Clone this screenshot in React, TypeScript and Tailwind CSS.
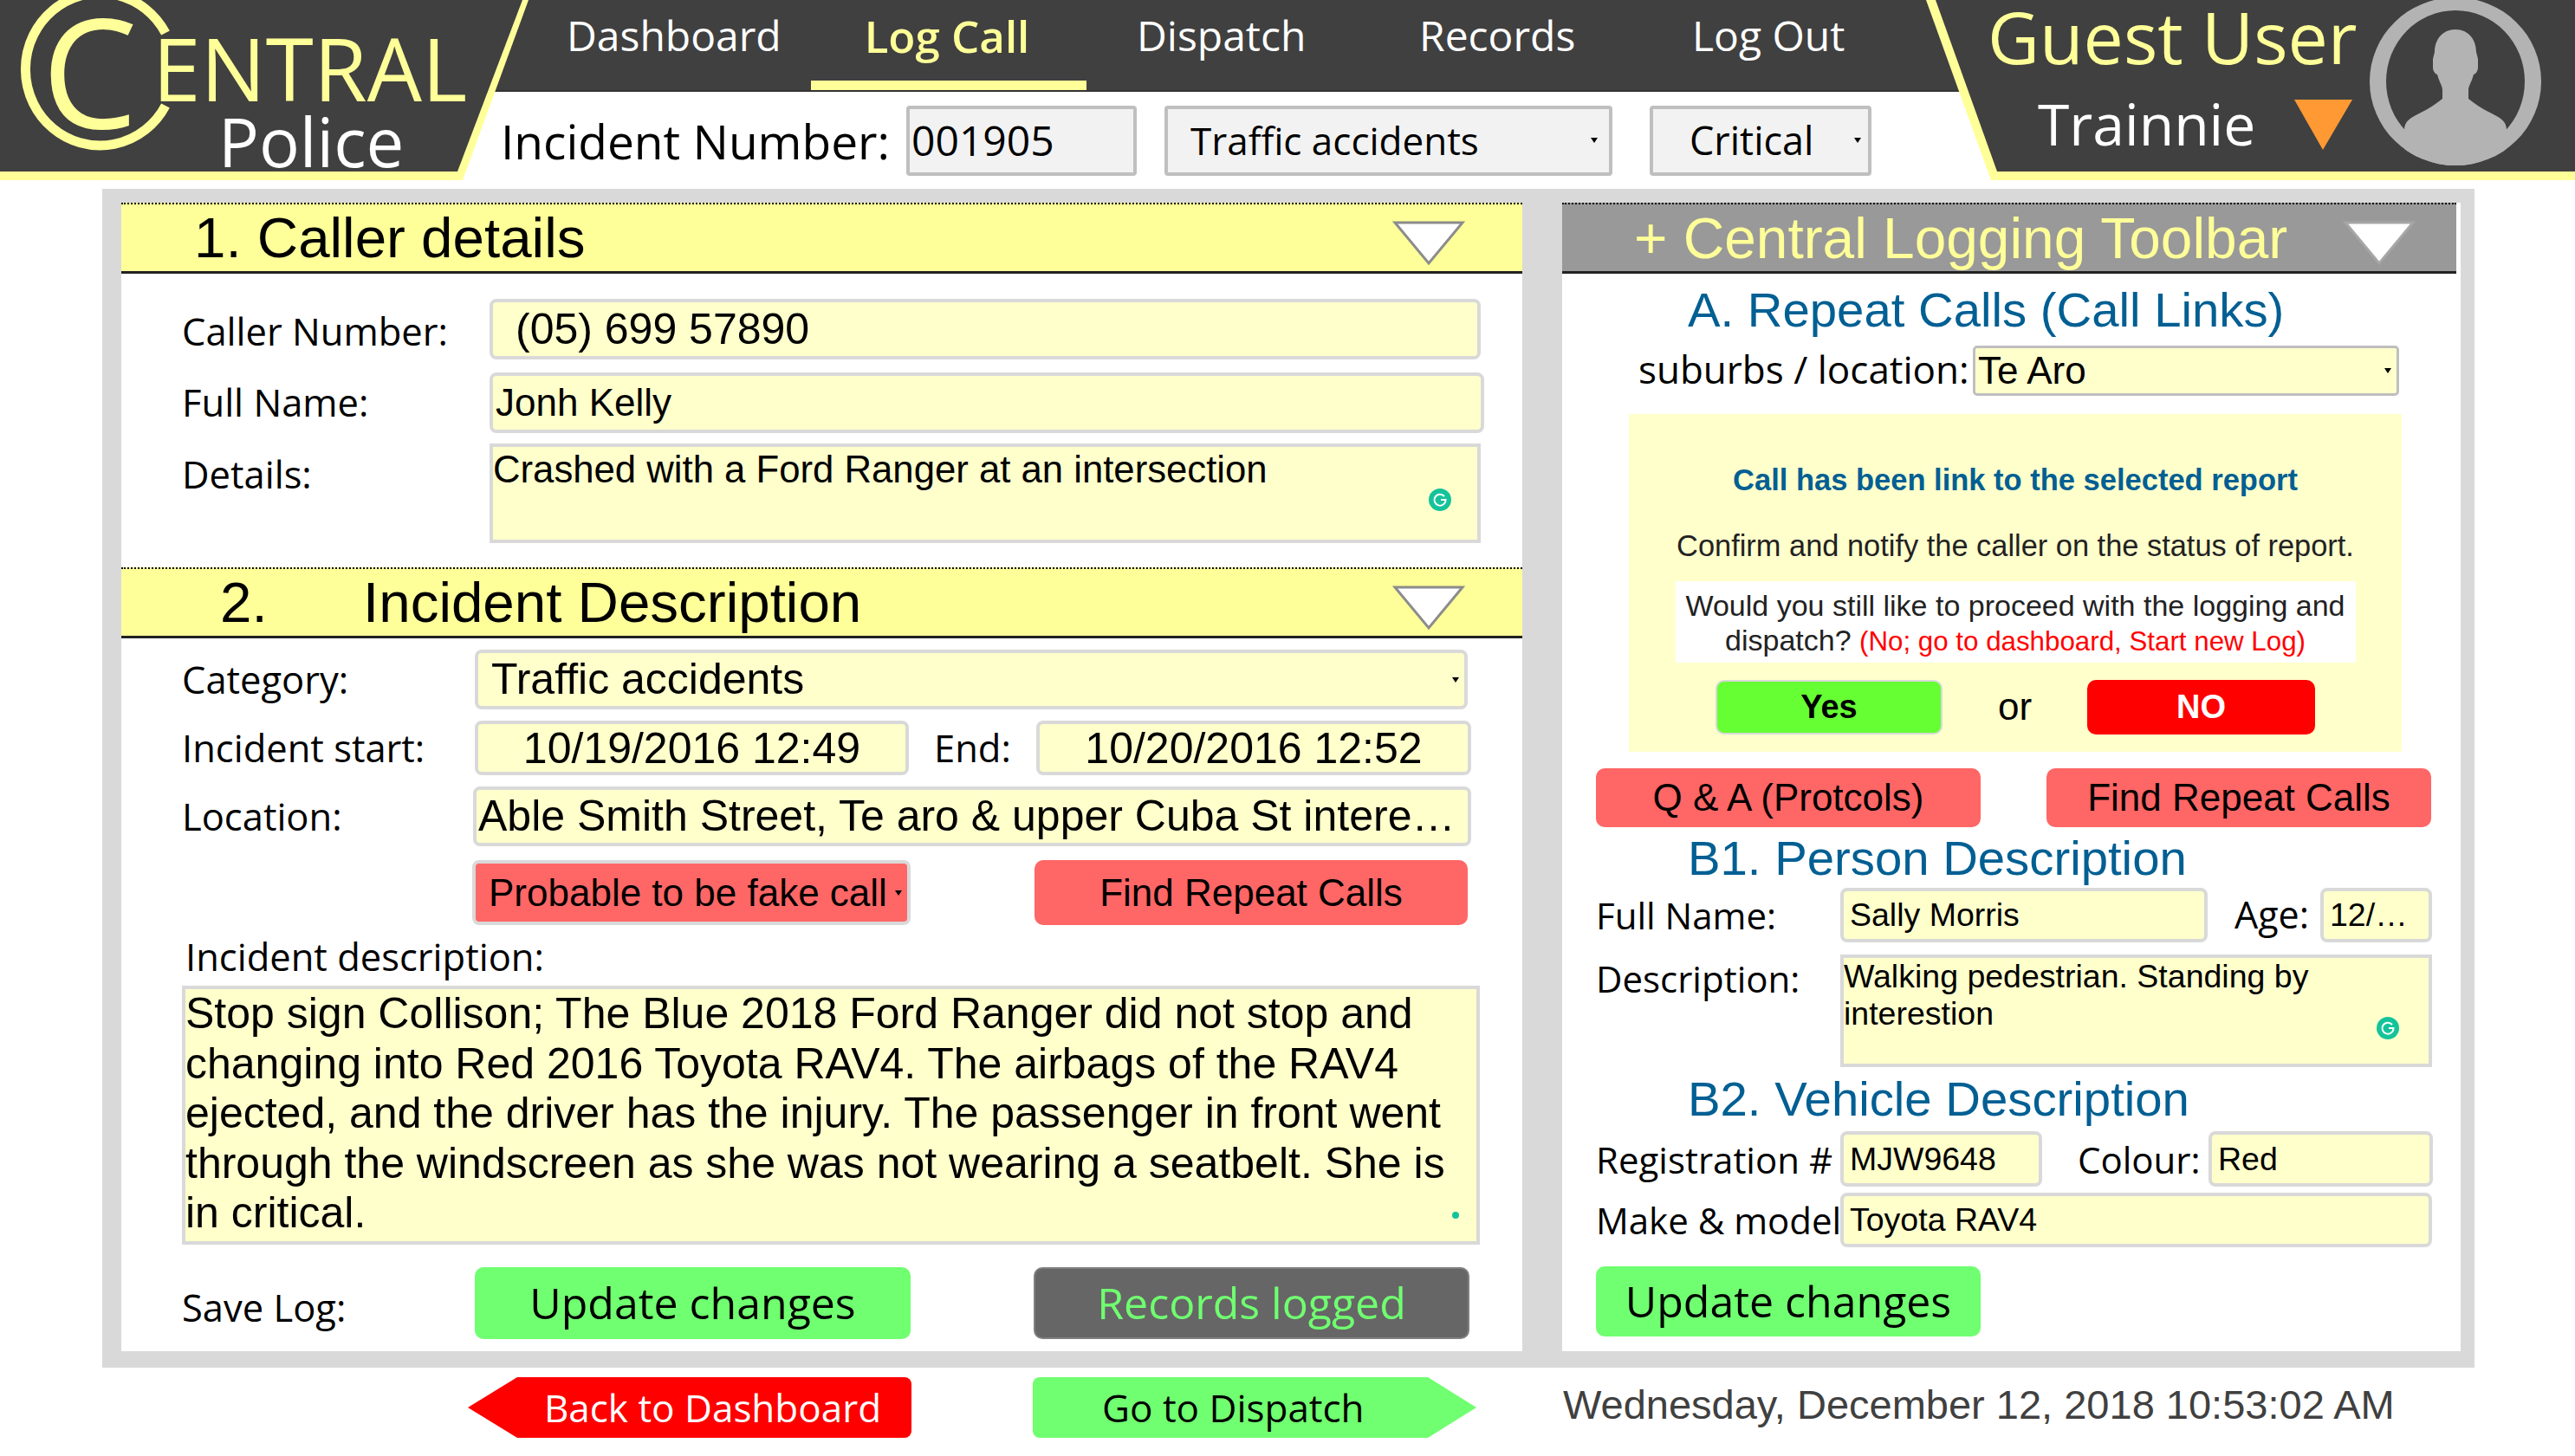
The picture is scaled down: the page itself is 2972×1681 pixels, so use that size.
import { twMerge } from "tailwind-merge";

const arial = "[font-family:'Liberation_Sans',Arial,sans-serif]";

const Arrow = () => (
  <span className="ml-auto h-0 w-0 shrink-0 border-x-[4px] border-t-[6px] border-x-transparent border-t-black" />
);

const Triangle = ({ stroke }: { stroke: string }) => (
  <svg className="mt-[10px]" width="84" height="52" viewBox="0 0 84 52">
    <polygon points="3,2 81,2 42,49" fill="#fff" stroke={stroke} strokeWidth="3" />
  </svg>
);

const Grammarly = () => (
  <svg width="26" height="26" viewBox="0 0 26 26">
    <circle cx="13" cy="13" r="13" fill="#15c39a" />
    <path d="M18 9 A6.5 6.5 0 1 0 19.500 13 L14 13" fill="none" stroke="#fff" strokeWidth="2" />
  </svg>
);

const Field = ({ className, children }: { className: string; children?: React.ReactNode }) => (
  <div className={twMerge(`flex shrink-0 items-center overflow-hidden whitespace-nowrap rounded-[8px] border-[4px] border-[#d9d9d9] bg-[#ffffcc] text-black ${arial}`, className)}>
    {children}
  </div>
);

const Btn = ({ className, children }: { className: string; children: React.ReactNode }) => (
  <div className={`flex shrink-0 items-center justify-center rounded-[10px] ${className}`}>{children}</div>
);

const SectionBar = ({ children }: { children: React.ReactNode }) => (
  <div className={`flex h-[82px] shrink-0 items-center border-t-2 border-b-[3px] border-t-black border-b-[#222] [border-top-style:dotted] bg-[#ffff99] pr-[66px] pt-[2px] text-[65.500px] text-black ${arial}`}>
    {children}
    <span className="ml-auto flex">
      <Triangle stroke="#8c8c8c" />
    </span>
  </div>
);

const BlueTitle = ({ className, children }: { className: string; children: React.ReactNode }) => (
  <div className={`pl-[145px] text-[56.300px] leading-[60px] text-[#005f93] ${arial} ${className}`}>{children}</div>
);

const Logo = () => (
  <div className="relative z-10 h-[208px] w-[610px] shrink-0 bg-[#ffff99] [clip-path:polygon(0_0,610px_0,534px_208px,0_208px)]">
    <div className="relative h-[198px] w-[603px] overflow-hidden bg-[#404040] [clip-path:polygon(0_0,603px_0,528px_198px,0_198px)]">
      <svg className="absolute left-0 top-0" width="200" height="180" viewBox="0 0 200 180">
        <path d="M191 38 A86 88 0 1 0 191 122" fill="none" stroke="#ffff99" strokeWidth="11" />
      </svg>
      <span className="absolute left-[48px] top-[5px] text-[176px] leading-[150px] text-[#ffff99]">C</span>
      <span className="absolute left-[176px] top-[28px] text-[100px] leading-[100px] text-[#ffff99]">ENTRAL</span>
      <span className="absolute left-[252px] top-[133px] text-[78px] leading-[60px] text-white">Police</span>
    </div>
  </div>
);

const Nav = () => (
  <div className="flex h-[106px] shrink-0 items-start border-b-2 border-[#333] bg-[#404040] pl-[124px] text-[48px] leading-[82px] text-white">
    <span className="w-[282px]">Dashboard</span>
    <span className="relative flex h-[104px] w-[318px] justify-center pr-[4px] text-[51px] font-semibold text-[#ffff99]">
      Log Call
      <span className="absolute bottom-0 left-0 h-[11px] w-full bg-[#ffff99]" />
    </span>
    <span className="ml-[58px] w-[326px]">Dispatch</span>
    <span className="w-[315px]">Records</span>
    <span>Log Out</span>
  </div>
);

const IncidentBar = () => (
  <div className="flex items-center pl-[48px] pt-[15px] text-black">
    <span className="w-[468px] shrink-0 whitespace-nowrap pt-[2px] text-[55px] leading-[80px]">Incident Number:</span>
    <div className="flex h-[81px] w-[266px] shrink-0 items-center rounded-[4px] border-[4px] border-[#bfbfbf] bg-[#f2f2f2] pl-[2px] text-[48px]">001905</div>
    <div className="ml-[32px] flex h-[81px] w-[517px] shrink-0 items-center rounded-[4px] border-[4px] border-[#bfbfbf] bg-[#f2f2f2] pl-[26px] pr-[13px] text-[44px]">
      Traffic accidents
      <Arrow />
    </div>
    <div className="ml-[43px] flex h-[81px] w-[256px] shrink-0 items-center rounded-[4px] border-[4px] border-[#bfbfbf] bg-[#f2f2f2] pl-[42px] pr-[8px] text-[45px]">
      Critical
      <Arrow />
    </div>
  </div>
);

const Avatar = () => (
  <svg className="absolute left-[511px] top-[-6px]" width="200" height="200" viewBox="0 0 200 200">
    <defs>
      <clipPath id="ring">
        <ellipse cx="100" cy="100" rx="99" ry="97" />
      </clipPath>
    </defs>
    <ellipse cx="100" cy="100" rx="99" ry="97" fill="#b3b3b3" />
    <ellipse cx="100" cy="100" rx="80" ry="82" fill="#404040" />
    <path
      clipPath="url(#ring)"
      d="M100 40 C85 40 76 52 76 66 L74 74 L74 84 C74 88 77 92 79 92 C81 100 85 105 85 110 L85 120 C75 128 68 132 60 136 C48 142 41 146 41 156 L41 200 L159 200 L159 156 C159 146 152 142 140 136 C132 132 125 128 115 120 L115 110 C115 105 119 100 121 92 C123 92 126 88 126 84 L126 74 L124 66 C124 52 115 40 100 40 Z"
      fill="#b3b3b3"
    />
  </svg>
);

const UserBlock = () => (
  <div className="relative z-10 h-[208px] w-[749px] shrink-0 bg-[#ffff99] [clip-path:polygon(0_0,749px_0,749px_208px,75px_208px)]">
    <div className="relative h-[198px] w-[749px] bg-[#404040] [clip-path:polygon(11px_0,749px_0,749px_198px,82px_198px)]">
      <div className="absolute left-[71px] top-[0px] -translate-y-[3px] whitespace-nowrap text-[82.500px] leading-[90px] text-[#ffff99]">Guest User</div>
      <div className="absolute left-[129px] top-[102px] whitespace-nowrap text-[66px] leading-[80px] text-white">Trainnie</div>
      <svg className="absolute left-[425px] top-[115px]" width="67" height="58" viewBox="0 0 67 58">
        <polygon points="0,0 67,0 33,58" fill="#ff9933" />
      </svg>
      <Avatar />
    </div>
  </div>
);

const LeftPanel = () => (
  <div className="flex h-[1326px] w-[1617px] shrink-0 flex-col bg-white text-[43.500px] text-black">
    <SectionBar>
      <span className="ml-[84px]">1. Caller details</span>
    </SectionBar>

    <div className="mt-[29px] flex h-[70px] items-center pl-[70px]">
      <span className="w-[355px] pt-[6px]">Caller Number:</span>
      <Field className="h-[70px] w-[1144px] pl-[26px] pt-[1px] text-[50px]">(05) 699 57890</Field>
    </div>
    <div className="mt-[15px] flex h-[70px] items-center pl-[70px]">
      <span className="w-[355px]">Full Name:</span>
      <Field className="h-[70px] w-[1148px] pl-[3px] text-[44px]">Jonh Kelly</Field>
    </div>
    <div className="mt-[12px] flex h-[115px] items-start pl-[70px]">
      <span className="w-[355px] pt-[8px] leading-[56px]">Details:</span>
      <Field className="relative h-[115px] w-[1144px] items-start rounded-none pl-[0px] text-[43.700px] leading-[52px]">
        Crashed with a Ford Ranger at an intersection
        <span className="absolute right-[30px] top-[48px] flex">
          <Grammarly />
        </span>
      </Field>
    </div>

    <div className="mt-[28px]">
      <SectionBar>
        <span className="ml-[114px] w-[165px]">2.</span>
        <span>Incident Description</span>
      </SectionBar>
    </div>

    <div className="mt-[13px] flex h-[69px] items-center pl-[70px]">
      <span className="w-[338px]">Category:</span>
      <Field className="h-[69px] w-[1146px] pl-[15px] pr-[6px] text-[50px]">
        Traffic accidents
        <Arrow />
      </Field>
    </div>
    <div className="mt-[13px] flex h-[63px] items-center pl-[70px]">
      <span className="w-[338px]">Incident start:</span>
      <Field className="h-[63px] w-[501px] justify-center pt-[2px] text-[50px]">10/19/2016 12:49</Field>
      <span className="ml-[29px] w-[118px]">End:</span>
      <Field className="h-[63px] w-[502px] justify-center pt-[2px] text-[50px]">10/20/2016 12:52</Field>
    </div>
    <div className="mt-[13px] flex h-[69px] items-center pl-[70px]">
      <span className="w-[336px]">Location:</span>
      <Field className="h-[69px] w-[1152px] pl-[2px] text-[50px]">
        <span className="overflow-hidden text-ellipsis">Able Smith Street, Te aro &amp; upper Cuba St interesection</span>
      </Field>
    </div>
    <div className="mt-[16px] flex h-[75px] items-center pl-[405px]">
      <Field className="h-[75px] w-[506px] bg-[#ff6666] pl-[15px] pr-[6px] text-[44px]">
        Probable to be fake call
        <Arrow />
      </Field>
      <Btn className={`ml-[143px] h-[75px] w-[500px] bg-[#ff6666] text-[44px] ${arial}`}>Find Repeat Calls</Btn>
    </div>
    <div className="mt-[18px] h-[40px] pl-[74px] leading-[38px]">Incident description:</div>
    <div className={`relative ml-[70px] mt-[12px] h-[299px] w-[1498px] shrink-0 border-[4px] border-[#d9d9d9] bg-[#ffffcc] text-[50px] leading-[57.500px] ${arial}`}>
      Stop sign Collison; The Blue 2018 Ford Ranger did not stop and changing into Red 2016 Toyota RAV4. The airbags of the RAV4 ejected, and the driver has the injury. The passenger in front went through the windscreen as she was not wearing a seatbelt. She is in critical.
      <span className="absolute bottom-[26px] right-[20px] h-[8px] w-[8px] rounded-full bg-[#15c39a]" />
    </div>
    <div className="mt-[26px] flex h-[83px] items-center pl-[70px]">
      <span className="w-[338px] pt-[10px]">Save Log:</span>
      <Btn className="h-[83px] w-[503px] bg-[#70ff70] text-[50px]">Update changes</Btn>
      <Btn className="ml-[142px] h-[83px] w-[503px] border-2 border-[#808080] bg-[#666666] text-[50px] text-[#70ff70]">Records logged</Btn>
    </div>
  </div>
);

const RightPanel = () => (
  <div className="flex h-[1326px] w-[1037px] shrink-0 flex-col bg-white text-[42px] text-black">
    <div className={`flex h-[82px] w-[1032px] shrink-0 items-center border-t-2 border-b-[3px] border-t-black border-b-[#222] bg-[#999999] pl-[83px] pr-[47px] pt-[2px] text-[65.800px] text-[#ffff99] [border-top-style:dotted] ${arial}`}>
      + Central Logging Toolbar
      <span className="ml-auto flex">
        <Triangle stroke="#a6a6a6" />
      </span>
    </div>
    <BlueTitle className="mt-[12px]">A. Repeat Calls (Call Links)</BlueTitle>
    <div className="mt-[11px] flex h-[58px] items-center pl-[88px]">
      <span className="w-[386px] shrink-0 -translate-y-[2px] whitespace-nowrap text-[44px]">suburbs / location:</span>
      <Field className="h-[58px] w-[492px] rounded-[5px] border-[3px] border-[#bfbfbf] pl-[3px] pr-[6px] text-[44px]">
        Te Aro
        <Arrow />
      </Field>
    </div>
    <div className={`ml-[77px] mt-[21px] flex h-[390px] w-[892px] shrink-0 flex-col items-center bg-[#ffffcc] text-center ${arial}`}>
      <div className="mt-[54px] text-[34.500px] font-bold leading-[44px] text-[#005f93]">Call has been link to the selected report</div>
      <div className="mt-[32px] text-[34.400px] leading-[44px] text-[#222]">Confirm and notify the caller on the status of report.</div>
      <div className="mt-[19px] h-[94px] w-[785px] bg-white pt-[8px] text-[34px] leading-[40px] text-[#222]">
        Would you still like to proceed with the logging and dispatch? <span className="text-[31.300px] text-[#ff0000]">(No; go to dashboard, Start new Log)</span>
      </div>
      <div className="mt-[18px] flex items-center">
        <Btn className="h-[63px] w-[262px] rounded-[6px] border-2 border-[#d9d9d9] bg-[#66ff33] text-[38px] font-bold">Yes</Btn>
        <span className="w-[167px] text-center text-[44px]">or</span>
        <Btn className="h-[63px] w-[263px] rounded-[6px] bg-[#ff0000] text-[38px] font-bold text-white">NO</Btn>
      </div>
    </div>
    <div className={`ml-[39px] mt-[19px] flex h-[68px] gap-[76px] text-[44px] ${arial}`}>
      <Btn className="w-[444px] bg-[#ff6666]">Q &amp; A (Protcols)</Btn>
      <Btn className="w-[444px] bg-[#ff6666]">Find Repeat Calls</Btn>
    </div>
    <BlueTitle className="mt-[6px]">B1. Person Description</BlueTitle>
    <div className="mt-[4px] flex h-[63px] items-center pl-[39px]">
      <span className="w-[282px]">Full Name:</span>
      <Field className="h-[63px] w-[424px] pl-[7px] text-[37.500px]">Sally Morris</Field>
      <span className="ml-[31px] w-[99px] text-[43px]">Age:</span>
      <Field className="h-[63px] w-[129px] pl-[7px] text-[37.500px]">12/…</Field>
    </div>
    <div className="mt-[14px] flex h-[130px] items-start pl-[39px]">
      <span className="w-[282px] leading-[56px]">Description:</span>
      <Field className="relative h-[130px] w-[683px] items-start whitespace-normal rounded-none pl-[0px] text-[37.500px] leading-[43px]">
        <span>
          Walking pedestrian. Standing by
          <br />
          interestion
        </span>
        <span className="absolute right-[34px] top-[68px] flex">
          <Grammarly />
        </span>
      </Field>
    </div>
    <BlueTitle className="mt-[7px]">B2. Vehicle Description</BlueTitle>
    <div className="mt-[7px] flex h-[64px] items-center pl-[39px]">
      <span className="w-[282px] whitespace-nowrap">Registration #</span>
      <Field className="h-[64px] w-[233px] pl-[7px] text-[37.500px]">MJW9648</Field>
      <span className="ml-[41px] w-[151px]">Colour:</span>
      <Field className="h-[64px] w-[259px] pl-[7px] text-[37.500px]">Red</Field>
    </div>
    <div className="mt-[7px] flex h-[63px] items-center pl-[39px]">
      <span className="w-[282px] whitespace-nowrap">Make &amp; model</span>
      <Field className="h-[63px] w-[683px] pl-[7px] text-[37.500px]">Toyota RAV4</Field>
    </div>
    <Btn className="ml-[39px] mt-[22px] h-[81px] w-[444px] bg-[#70ff70] text-[50px]">Update changes</Btn>
  </div>
);

const App = () => {
  return (
    <div className="min-h-screen w-[2972px] overflow-hidden bg-white [font-family:'Open_Sans',sans-serif]">
      {/* Header */}
      <div className="flex h-[208px]">
        <Logo />
        <div className="-mx-[80px] min-w-0 flex-1">
          <Nav />
          <IncidentBar />
        </div>
        <UserBlock />
      </div>

      {/* Main */}
      <div className="ml-[118px] mt-[10px] flex h-[1361px] w-[2738px] gap-[46px] bg-[#d9d9d9] pl-[22px] pt-[16px]">
        <LeftPanel />
        <RightPanel />
      </div>

      {/* Footer */}
      <div className="mt-[11px] flex h-[70px] items-center pl-[540px]">
        <div className="flex h-[70px] w-[512px] items-center justify-center rounded-r-[8px] bg-[#ff0000] pl-[53px] text-[44px] text-white [clip-path:polygon(57px_0,100%_0,100%_100%,57px_100%,0_50%)]">
          Back to Dashboard
        </div>
        <div className="ml-[140px] flex h-[70px] w-[512px] items-center rounded-l-[8px] bg-[#70ff70] pl-[80px] text-[44px] text-black [clip-path:polygon(0_0,456px_0,100%_50%,456px_100%,0_100%)]">
          Go to Dispatch
        </div>
        <span className={`ml-[100px] -mt-[6px] whitespace-nowrap text-[47px] text-[#404040] ${arial}`}>
          Wednesday, December 12, 2018 10:53:02 AM
        </span>
      </div>
    </div>
  );
};

export default App;
